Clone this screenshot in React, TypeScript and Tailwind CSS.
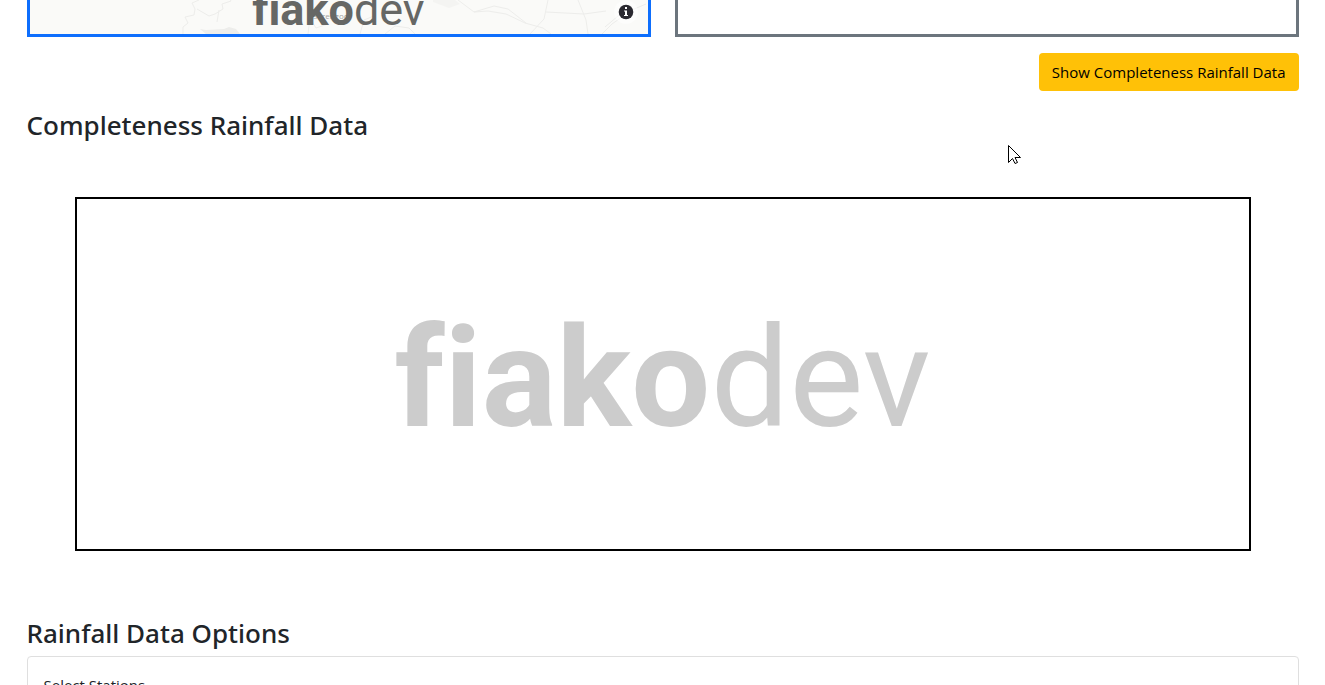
function MapLines() {
  return (
    <svg className="absolute inset-0 h-full w-full" viewBox="0 0 618 34" preserveAspectRatio="xMidYMid slice" fill="none" aria-hidden="true">
      <g stroke="#ededeb" strokeWidth="1">
        <path d="M169 0l-7 3 3 6-1 6-9 2 3 6-5 4v7M167 9l12 7 6-2 8-5-1-5 9-3-2-4M189 10l-2 12" />
        <path d="M278 34l2-16 6 10 12-4M330 34l4-14 10-4M355 34l10-8 14 2 6 6" />
        <path d="M428 0l16 12 14-1 18 3 19 9 18 5 8 6M444 12l20-6 14 3 18 14M500 34l14-15 4-19M516 12l38 2 22-3M548 0l8 20 2 14M572 34l10-10 20-14 14-6M575 27l26-22" />
      </g>
      <path d="M170 29l6 1 18-1 5-2 7 2 4 5h-34z" fill="#ededeb" />
      <path d="M403 0h22l5 4-11 4-16-6z" fill="#f4f4f2" />
      <text x="283" y="19" fontSize="8" fill="#a5a5a3">Serengoo</text>
    </svg>
  );
}

function InfoIcon() {
  return (
    <svg className="h-4 w-4" viewBox="0 0 16 16" aria-hidden="true">
      <circle cx="8" cy="8" r="7.3" fill="#2a2930" />
      <path d="M7 3h2v2H7zM6 6.5h3V11h1v1H6v-1h1V7.500H6z" fill="#fff" />
    </svg>
  );
}

function Cursor() {
  return (
    <svg className="pointer-events-none absolute left-[1008px] top-[145px] h-5 w-[14px]" viewBox="0 0 14 20" aria-hidden="true">
      <path d="M.5.5v17l4-4 2.500 5 2.500-1-2.500-5h5.500z" fill="#fff" stroke="#000" strokeWidth="1" />
    </svg>
  );
}

export default function App() {
  return (
    <div className="relative h-screen overflow-hidden bg-white font-['Open_Sans','Noto_Sans',sans-serif] text-base text-[#212529]">
      <main className="mx-auto w-[96%]">
        <div className="grid grid-cols-2 gap-6">
          <section aria-label="Station map" className="relative flex h-[37px] items-end justify-center overflow-hidden border-[3px] border-t-0 border-[#0d6efd] bg-[#fafaf8]">
            <MapLines />
            <span className="relative pb-[3px] font-[Roboto,sans-serif] text-[45px] leading-[42px] text-[#666765] [font-variant-ligatures:none]">
              <b className="font-bold">fiako</b>dev
            </span>
            <button aria-label="Map attribution" className="absolute right-2.5 bottom-2.5 flex h-6 w-6 items-center justify-center rounded-full bg-white/50">
              <InfoIcon />
            </button>
          </section>
          <section aria-label="Station details" className="h-[37px] border-[3px] border-t-0 border-[#6c757d]" />
        </div>
        <div className="mt-4 flex justify-end">
          <button className="rounded bg-[#ffc107] px-[13px] py-[7px] text-[15px] leading-6 text-black">Show Completeness Rainfall Data</button>
        </div>
        <h2 className="mt-4 font-['Noto_Sans',sans-serif] text-[26px] leading-9 font-medium">Completeness Rainfall Data</h2>
        <figure className="mx-12 mt-[54px] flex h-[354px] items-center justify-center border-2 border-black pt-2 font-[Roboto,sans-serif] text-[140px] leading-none text-[#ccc] [font-variant-ligatures:none]">
          <span><b className="font-bold">fiako</b>dev</span>
        </figure>
        <h2 className="mt-16 font-['Noto_Sans',sans-serif] text-[26px] leading-9 font-medium">Rainfall Data Options</h2>
        <form className="mt-[5px] rounded border border-[#dfdfdf] p-4">
          <label htmlFor="stations" className="block text-[15px] leading-6">Select Stations</label>
          <select id="stations" className="mt-2 w-full rounded border border-[#ced4da] px-3 py-2"></select>
        </form>
      </main>
      <Cursor />
    </div>
  );
}
